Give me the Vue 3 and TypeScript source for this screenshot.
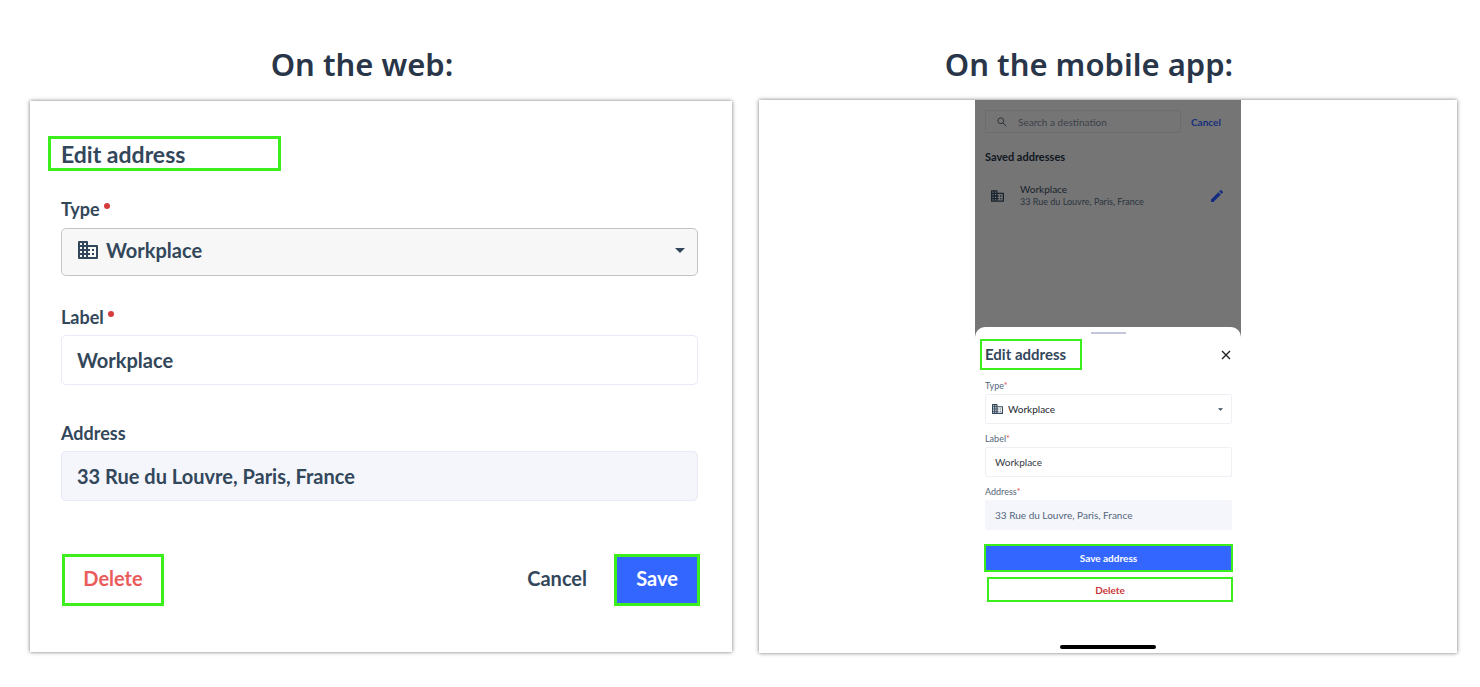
<script setup lang="ts">
import { ref } from 'vue'

const buildingPath: string =
  'M12 7V4a1 1 0 0 0-1-1H3a1 1 0 0 0-1 1v16a1 1 0 0 0 1 1h18a1 1 0 0 0 1-1V8a1 1 0 0 0-1-1h-9zM6 19H4v-2h2v2zm0-4H4v-2h2v2zm0-4H4V9h2v2zm0-4H4V5h2v2zm4 12H8v-2h2v2zm0-4H8v-2h2v2zm0-4H8V9h2v2zm0-4H8V5h2v2zm10 12h-8v-2h2v-2h-2v-2h2v-2h-2V9h8v10zm-2-8h-2v2h2v-2zm0 4h-2v2h2v-2z'

const type = ref<string>('Workplace')
const label = ref<string>('Workplace')
const address = ref<string>('33 Rue du Louvre, Paris, France')
const search = ref<string>('')
</script>

<template>
  <main class="page">
    <h2 class="title">On the web:</h2>
    <h2 class="title">On the mobile app:</h2>

    <section class="card web">
      <h3 class="web-heading marked">Edit address</h3>
      <form class="web-form" @submit.prevent>
        <div class="field">
          <label for="web-type">Type<span class="dot"></span></label>
          <div class="control picker">
            <svg class="building" viewBox="2 3 20 18"><path :d="buildingPath" /></svg>
            <select id="web-type" v-model="type">
              <option>Workplace</option>
            </select>
            <svg class="caret" viewBox="0 0 10 5"><path d="M0 0h10L5 5z" /></svg>
          </div>
        </div>
        <div class="field">
          <label for="web-label">Label<span class="dot"></span></label>
          <input id="web-label" v-model="label" class="control" type="text" />
        </div>
        <div class="field">
          <label for="web-address">Address</label>
          <input id="web-address" v-model="address" class="control locked" type="text" readonly />
        </div>
        <div class="actions">
          <button type="button" class="delete marked">Delete</button>
          <button type="button" class="cancel">Cancel</button>
          <button type="submit" class="save marked">Save</button>
        </div>
      </form>
    </section>

    <section class="card mobile">
      <div class="phone">
        <div class="backdrop">
          <div class="search-row">
            <label class="search">
              <svg viewBox="0 0 10 10"><circle cx="3.8" cy="3.8" r="2.9" /><path d="M5.9 5.9L9.4 9.4" /></svg>
              <input v-model="search" type="text" placeholder="Search a destination" aria-label="Search a destination" />
            </label>
            <button type="button" class="search-cancel">Cancel</button>
          </div>
          <h4 class="saved-title">Saved addresses</h4>
          <div class="saved">
            <svg class="building" viewBox="2 3 20 18"><path :d="buildingPath" /></svg>
            <div class="saved-text">
              <span class="saved-name">Workplace</span>
              <span class="saved-address">33 Rue du Louvre, Paris, France</span>
            </div>
            <button type="button" class="edit" aria-label="Edit">
              <svg viewBox="3 3 18 18">
                <path d="M3 17.2V21h3.8L17.8 9.9l-3.7-3.7L3 17.2zM20.7 7a1 1 0 0 0 0-1.4l-2.3-2.3a1 1 0 0 0-1.4 0l-1.8 1.8 3.7 3.7L20.7 7z" />
              </svg>
            </button>
          </div>
        </div>

        <div class="sheet">
          <div class="handle"></div>
          <div class="sheet-head">
            <h3 class="sheet-title marked">Edit address</h3>
            <button type="button" class="close" aria-label="Close">
              <svg viewBox="0 0 10 10"><path d="M1 1l8 8M9 1L1 9" /></svg>
            </button>
          </div>
          <form class="sheet-form" @submit.prevent>
            <div class="m-field">
              <label for="m-type">Type<span class="star">*</span></label>
              <div class="control picker">
                <svg class="building" viewBox="2 3 20 18"><path :d="buildingPath" /></svg>
                <select id="m-type" v-model="type">
                  <option>Workplace</option>
                </select>
                <svg class="caret" viewBox="0 0 10 5"><path d="M0 0h10L5 5z" /></svg>
              </div>
            </div>
            <div class="m-field">
              <label for="m-label">Label<span class="star">*</span></label>
              <input id="m-label" v-model="label" class="control" type="text" />
            </div>
            <div class="m-field">
              <label for="m-address">Address<span class="star">*</span></label>
              <input id="m-address" v-model="address" class="control locked" type="text" readonly />
            </div>
            <button type="submit" class="m-save marked">Save address</button>
            <button type="button" class="m-delete marked">Delete</button>
          </form>
          <div class="home-bar"></div>
        </div>
      </div>
    </section>
  </main>
</template>

<style>
body {
  margin: 0;
  background: #fff;
}
</style>

<style scoped>
* {
  box-sizing: border-box;
}

.page {
  display: grid;
  grid-template-columns: 702fr 698fr;
  column-gap: 27px;
  align-items: center;
  padding: 44px 23px 32px 30px;
  color: #33475b;
  font-family: Lato, 'Liberation Sans', sans-serif;
}

h2,
h3,
h4 {
  margin: 0;
}

button,
input,
select {
  margin: 0;
  padding: 0;
  border: 0;
  background: none;
  color: inherit;
  font: inherit;
  outline: none;
}

button {
  cursor: pointer;
}

svg {
  display: block;
  flex: none;
  fill: currentColor;
}

.title {
  margin-bottom: 16px;
  padding-right: 38px;
  color: #293548;
  font-family: 'Noto Sans', sans-serif;
  font-size: 31px;
  font-weight: 600;
  line-height: 40px;
  text-align: center;
}

.card {
  background: #fff;
  box-shadow: 0 0 4px rgba(0, 0, 0, 0.55);
}

.marked {
  border: 3px solid #3cee1c;
}

.web {
  padding: 35px 34px 46px 31px;
}

.web-heading {
  width: 233px;
  margin-left: -13px;
  padding: 2px 10px 0;
  font-size: 23px;
  line-height: 27px;
}

.web-form {
  padding-top: 26px;
  font-size: 20px;
  font-weight: 700;
}

.field {
  display: flex;
  flex-direction: column;
  gap: 7px;
  margin-bottom: 29px;
}

.field + .field {
  gap: 6px;
  margin-bottom: 36px;
}

.field label {
  display: flex;
  align-items: center;
  font-size: 18px;
  line-height: 24px;
}

.dot {
  width: 6px;
  height: 6px;
  margin: 0 0 6px 4px;
  border-radius: 50%;
  background: #d63c3c;
}

.field .control {
  width: 100%;
  height: 50px;
  padding: 0 15px;
  border: 1px solid #e9eaf5;
  border-radius: 5px;
}

.field .picker {
  height: 48px;
  padding: 0 12px 4px 16px;
  border-color: #c4c4c4;
  background: #f7f7f7;
}

.picker {
  display: flex;
  align-items: center;
}

.picker select {
  flex: 1;
  min-width: 0;
  height: 100%;
  appearance: none;
}

.field .building {
  width: 20px;
  height: 18px;
}

.field select {
  padding-left: 8px;
}

.field .caret {
  width: 10px;
  height: 5px;
}

.field .locked {
  border-color: #e7e9f4;
  background: #f4f6fc;
}

.actions {
  display: flex;
  align-items: center;
  height: 52px;
  margin: 53px -2px 0 1px;
}

.actions button {
  height: 52px;
  padding-bottom: 4px;
}

.delete {
  width: 102px;
  color: #ea5b5b;
}

.cancel {
  margin-left: auto;
  margin-right: 27px;
}

.save {
  width: 86px;
  background: #3366ff;
  color: #fff;
}

.mobile {
  display: flex;
  justify-content: center;
}

.phone {
  width: 266px;
  background: #757575;
  font-size: 10px;
}

.backdrop {
  height: 227px;
  padding: 10px 10px 0;
}

.search-row {
  display: flex;
  align-items: center;
  gap: 10px;
}

.search {
  display: flex;
  align-items: center;
  gap: 11px;
  width: 196px;
  height: 23px;
  padding-left: 11px;
  border: 1px solid #6c6c70;
  border-radius: 2px;
  color: #2c333c;
}

.search svg {
  width: 10px;
  height: 10px;
  fill: none;
  stroke: currentColor;
}

.search input {
  flex: 1;
  min-width: 0;
}

.search input::placeholder {
  color: #3b414a;
  opacity: 1;
}

.search-cancel {
  color: #172f7c;
  font-weight: 700;
}

.saved-title {
  margin-top: 17px;
  color: #0f1722;
  font-size: 11px;
  line-height: 14px;
}

.saved {
  display: flex;
  align-items: center;
  margin-top: 19px;
  padding: 0 8px 0 6px;
  color: #19232e;
}

.saved .building {
  width: 13px;
  height: 12px;
}

.saved-text {
  display: flex;
  flex: 1;
  flex-direction: column;
  padding-left: 16px;
}

.saved-name {
  line-height: 13px;
}

.saved-address {
  color: #2b333d;
  font-size: 9px;
  line-height: 12px;
}

.edit {
  color: #132c80;
}

.edit svg {
  width: 12px;
  height: 12px;
}

.sheet {
  height: 326px;
  padding-top: 5px;
  border-radius: 10px 10px 0 0;
  background: #fff;
}

.handle {
  width: 35px;
  height: 2px;
  margin: 0 auto;
  background: #c3c7da;
}

.sheet-head {
  display: flex;
  align-items: center;
  justify-content: space-between;
  padding: 5px 10px 0 5px;
}

.sheet .marked {
  border-width: 2px;
}

.sheet-title {
  width: 102px;
  padding: 0 3px;
  font-size: 15px;
  line-height: 27px;
}

.close {
  color: #222;
}

.close svg {
  width: 10px;
  height: 10px;
  fill: none;
  stroke: currentColor;
  stroke-width: 1.4;
}

.sheet-form {
  display: flex;
  flex-direction: column;
  padding: 9px 8px 0 9px;
}

.m-field {
  display: flex;
  flex-direction: column;
  gap: 2px;
  margin: 0 1px 8px;
}

.m-field label {
  color: #53657a;
  font-size: 9px;
  line-height: 13px;
}

.star {
  color: #e05050;
}

.m-field .control {
  width: 100%;
  height: 30px;
  padding: 0 9px;
  border: 1px solid #eff0f6;
  border-radius: 2px;
  color: #33383f;
}

.m-field .picker {
  padding: 0 8px 0 6px;
  color: #33475b;
}

.m-field .building {
  width: 11px;
  height: 10px;
}

.m-field select {
  padding-left: 5px;
  color: #22272e;
}

.m-field .caret {
  width: 5px;
  height: 3px;
}

.m-field .locked {
  border-color: #f4f6fc;
  background: #f4f6fc;
  color: #53657a;
}

.m-save {
  height: 28px;
  margin-top: 6px;
  background: #3366ff;
  color: #fff;
  font-weight: 700;
}

.m-delete {
  height: 25px;
  margin: 5px 0 0 3px;
  color: #c73737;
  font-weight: 700;
}

.home-bar {
  width: 96px;
  height: 4px;
  margin: 43px auto 0;
  border-radius: 2px;
  background: #000;
}
</style>
